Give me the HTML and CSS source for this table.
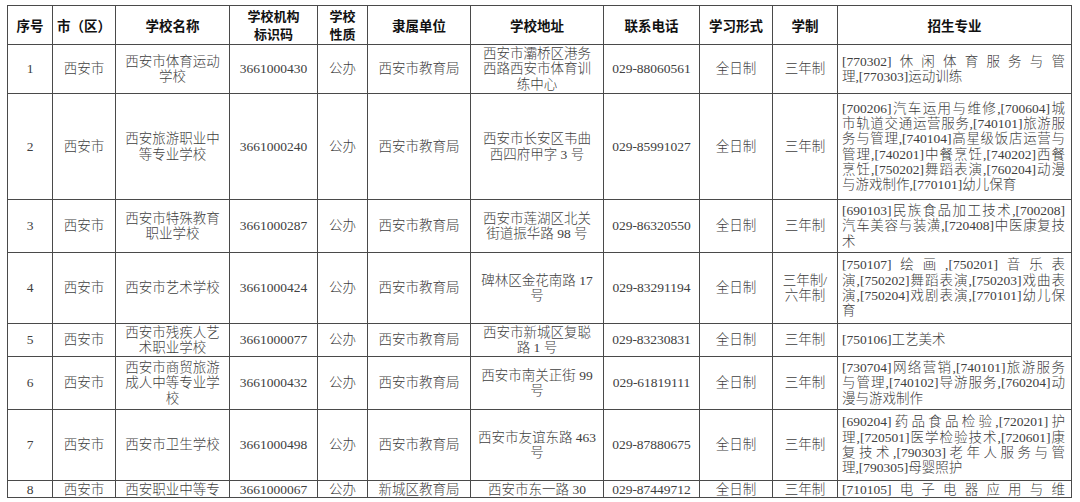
FILE: index.html
```html
<!DOCTYPE html>
<html lang="zh-CN">
<head>
<meta charset="utf-8">
<title>招生学校名单</title>
<link rel="stylesheet" href="styles.css">
</head>
<body>
<table class="grid">
  <colgroup>
    <col class="c-no"><col class="c-city"><col class="c-name"><col class="c-code"><col class="c-type"><col class="c-dept"><col class="c-addr"><col class="c-tel"><col class="c-form"><col class="c-len"><col class="c-major">
  </colgroup>
  <thead>
    <tr class="r-head">
      <th>序号</th><th>市（区）</th><th>学校名称</th><th class="two">学校机构<br>标识码</th><th class="two">学校<br>性质</th><th>隶属单位</th><th>学校地址</th><th>联系电话</th><th>学习形式</th><th>学制</th><th>招生专业</th>
    </tr>
  </thead>
  <tbody>
    <tr class="r1">
      <td>1</td><td>西安市</td><td>西安市体育运动<br>学校</td><td>3661000430</td><td>公办</td><td>西安市教育局</td><td>西安市灞桥区港务<br>西路西安市体育训<br>练中心</td><td>029-88060561</td><td>全日制</td><td>三年制</td>
      <td class="major"><div class="j">[770302]休闲体育服务与管</div><div>理,[770303]运动训练</div></td>
    </tr>
    <tr class="r2">
      <td>2</td><td>西安市</td><td>西安旅游职业中<br>等专业学校</td><td>3661000240</td><td>公办</td><td>西安市教育局</td><td>西安市长安区韦曲<br>西四府甲字 3 号</td><td>029-85991027</td><td>全日制</td><td>三年制</td>
      <td class="major"><div class="j">[700206]汽车运用与维修,[700604]城</div><div class="j">市轨道交通运营服务,[740101]旅游服</div><div class="j">务与管理,[740104]高星级饭店运营与</div><div class="j">管理,[740201]中餐烹饪,[740202]西餐</div><div class="j">烹饪,[750202]舞蹈表演,[760204]动漫</div><div>与游戏制作,[770101]幼儿保育</div></td>
    </tr>
    <tr class="r3">
      <td>3</td><td>西安市</td><td>西安市特殊教育<br>职业学校</td><td>3661000287</td><td>公办</td><td>西安市教育局</td><td>西安市莲湖区北关<br>街道振华路 98 号</td><td>029-86320550</td><td>全日制</td><td>三年制</td>
      <td class="major"><div class="j">[690103]民族食品加工技术,[700208]</div><div class="j">汽车美容与装潢,[720408]中医康复技</div><div>术</div></td>
    </tr>
    <tr class="r4">
      <td>4</td><td>西安市</td><td>西安市艺术学校</td><td>3661000424</td><td>公办</td><td>西安市教育局</td><td>碑林区金花南路 17<br>号</td><td>029-83291194</td><td>全日制</td><td>三年制/<br>六年制</td>
      <td class="major"><div class="j">[750107]绘画,[750201]音乐表</div><div class="j">演,[750202]舞蹈表演,[750203]戏曲表</div><div class="j">演,[750204]戏剧表演,[770101]幼儿保</div><div>育</div></td>
    </tr>
    <tr class="r5">
      <td>5</td><td>西安市</td><td>西安市残疾人艺<br>术职业学校</td><td>3661000077</td><td>公办</td><td>西安市教育局</td><td>西安市新城区复聪<br>路 1 号</td><td>029-83230831</td><td>全日制</td><td>三年制</td>
      <td class="major"><div>[750106]工艺美术</div></td>
    </tr>
    <tr class="r6">
      <td>6</td><td>西安市</td><td>西安市商贸旅游<br>成人中等专业学<br>校</td><td>3661000432</td><td>公办</td><td>西安市教育局</td><td>西安市南关正街 99<br>号</td><td>029-61819111</td><td>全日制</td><td>三年制</td>
      <td class="major"><div class="j">[730704]网络营销,[740101]旅游服务</div><div class="j">与管理,[740102]导游服务,[760204]动</div><div>漫与游戏制作</div></td>
    </tr>
    <tr class="r7">
      <td>7</td><td>西安市</td><td>西安市卫生学校</td><td>3661000498</td><td>公办</td><td>西安市教育局</td><td>西安市友谊东路 463<br>号</td><td>029-87880675</td><td>全日制</td><td>三年制</td>
      <td class="major"><div class="j">[690204]药品食品检验,[720201]护</div><div class="j">理,[720501]医学检验技术,[720601]康</div><div class="j">复技术,[790303]老年人服务与管</div><div>理,[790305]母婴照护</div></td>
    </tr>
    <tr class="r8">
      <td>8</td><td>西安市</td><td>西安职业中等专</td><td>3661000067</td><td>公办</td><td>新城区教育局</td><td>西安市东一路 30</td><td>029-87449712</td><td>全日制</td><td>三年制</td>
      <td class="major"><div class="j">[710105]电子电器应用与维</div></td>
    </tr>
  </tbody>
</table>
</body>
</html>
```

FILE: styles.css
```css
html, body {
  margin: 0;
  background: #fff;
}
body {
  font-family: "Liberation Serif", "Noto Sans CJK SC", serif;
  font-size: 13.5px;
  font-weight: 300;
  color: #404040;
}
.grid {
  border-collapse: collapse;
  table-layout: fixed;
  width: 1064px;
  margin: 5px 0 0 7px;
}
.c-no { width: 45px; }
.c-city { width: 63px; }
.c-name { width: 114px; }
.c-code { width: 88px; }
.c-type { width: 50px; }
.c-dept { width: 103px; }
.c-addr { width: 133px; }
.c-tel { width: 96px; }
.c-form { width: 73px; }
.c-len { width: 65px; }
.c-major { width: 234px; }

.grid th, .grid td {
  border: 1px solid #4a4a4a;
  padding: 0;
  text-align: center;
  vertical-align: middle;
  line-height: 15.3px;
  white-space: nowrap;
  overflow: hidden;
}
.grid th {
  font-family: "Noto Sans CJK SC", sans-serif;
  font-weight: 700;
  font-size: 13.5px;
  line-height: 17px;
  color: #111;
}
.grid th.two {
  font-size: 13px;
  line-height: 18px;
}
.grid td.major {
  text-align: left;
  padding: 0 6px 0 4px;
}
.major .j {
  text-align: justify;
  text-align-last: justify;
}
.r-head { height: 39px; }
.r1 { height: 49px; }
.r2 { height: 106px; }
.r3 { height: 53px; }
.r4 { height: 71px; }
.r5 { height: 33px; }
.r6 { height: 53px; }
.r7 { height: 71px; }
.r8 { height: 17px; }
.r8 td { line-height: 15px; }
```
